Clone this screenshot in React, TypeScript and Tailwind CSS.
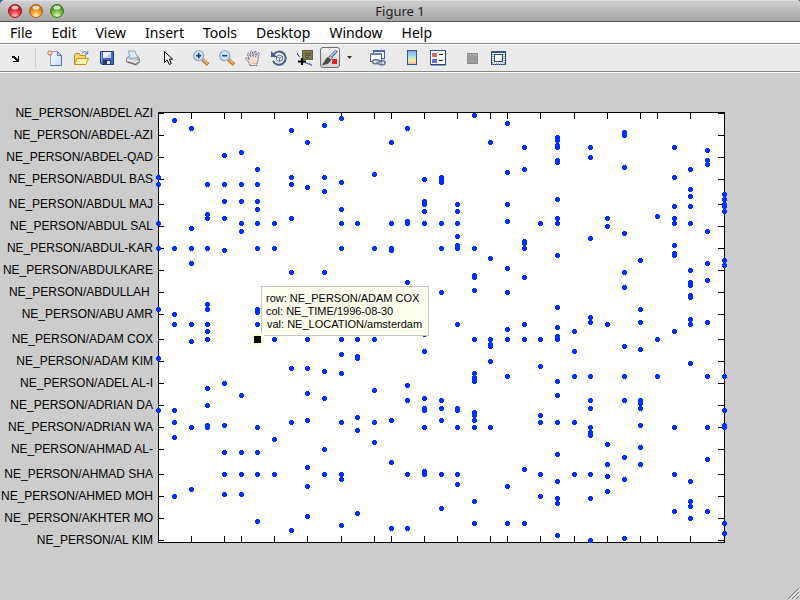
import React from "react";

const MENUS = ["File", "Edit", "View", "Insert", "Tools", "Desktop", "Window", "Help"];

const ROWS: [string, number][] = [
  ["ABDEL AZI", 113],
  ["ABDEL-AZI", 135],
  ["ABDEL-QAD", 157],
  ["ABDUL BAS", 179],
  ["ABDUL MAJ", 204],
  ["ABDUL SAL", 226],
  ["ABDUL-KAR", 248],
  ["ABDULKARE", 270],
  ["ABDULLAH\u00a0", 292],
  ["ABU AMR", 314],
  ["ADAM COX", 339],
  ["ADAM KIM", 361],
  ["ADEL AL-I", 383],
  ["ADRIAN DA", 405],
  ["ADRIAN WA", 427],
  ["AHMAD AL-", 449],
  ["AHMAD SHA", 474],
  ["AHMED MOH", 496],
  ["AKHTER MO", 518],
  ["AL KIM", 540],
];

const COLUMN_TICKS = [191, 224, 241, 274, 307, 341, 374, 391, 424, 457, 490, 507, 540, 574, 607, 640, 657, 690];

const POINTS: [number, number[]][] = [
  [158, [177, 184, 223, 248, 309, 358, 410]],
  [174, [120, 248, 314, 324, 410, 422, 437, 496]],
  [191, [128, 228, 248, 263, 324, 341, 427, 489]],
  [207, [184, 214, 218, 248, 304, 309, 324, 331, 339, 388, 405, 425, 427]],
  [224, [155, 184, 201, 218, 250, 383, 425, 452, 474, 494]],
  [241, [152, 184, 201, 223, 231, 395, 452, 474, 494]],
  [257, [169, 184, 201, 209, 223, 248, 309, 312, 324, 427, 452, 474, 521]],
  [274, [223, 248, 339, 439, 474]],
  [291, [130, 177, 184, 218, 272, 368, 422, 530]],
  [307, [142, 187, 339, 368, 393, 420, 467, 486, 516]],
  [324, [125, 177, 191, 272, 371, 398, 449, 474]],
  [341, [118, 182, 209, 223, 248, 339, 354, 373, 422, 474, 479, 525]],
  [357, [223, 339, 356, 358, 417, 430, 513]],
  [374, [174, 248, 339, 390, 422, 442]],
  [391, [142, 223, 248, 250, 420, 462, 528]],
  [407, [128, 221, 223, 282, 385, 400, 474, 528]],
  [424, [179, 201, 204, 211, 223, 334, 351, 398, 408, 410, 427, 471, 474]],
  [441, [177, 179, 182, 223, 248, 292, 400, 408, 420, 474, 508]],
  [457, [204, 211, 223, 236, 245, 248, 324, 408, 410, 427, 474, 484]],
  [474, [115, 248, 275, 277, 290, 339, 373, 377, 379, 381, 412, 415, 420, 427, 501, 523]],
  [490, [142, 258, 339, 344, 346, 361, 427]],
  [507, [123, 172, 204, 221, 268, 292, 329, 339, 376, 486, 523]],
  [524, [147, 169, 241, 243, 248, 277, 324, 339, 469, 523]],
  [540, [223, 339, 366, 415, 422, 474, 496]],
  [557, [137, 140, 145, 147, 160, 162, 199, 218, 223, 255, 307, 327, 336, 339, 381, 395, 422, 454, 481, 498, 503, 535]],
  [574, [331, 351, 376, 422, 474]],
  [590, [147, 157, 238, 317, 322, 376, 400, 408, 427, 432, 435, 474, 498, 540]],
  [607, [218, 226, 324, 444, 464, 476, 491]],
  [624, [132, 135, 167, 233, 272, 287, 346, 376, 400, 457, 479, 538]],
  [640, [260, 309, 322, 349, 400, 403, 408, 425, 447, 464]],
  [657, [216, 339, 376]],
  [674, [147, 177, 206, 218, 223, 245, 253, 255, 331, 427, 474, 511]],
  [690, [169, 189, 196, 206, 223, 270, 282, 285, 295, 297, 319, 324, 363, 481, 501, 506, 518]],
  [707, [150, 160, 164, 231, 263, 280, 322, 376, 427, 459, 511]],
  [724, [194, 199, 204, 206, 211, 260, 265, 376, 410, 425, 427, 523, 533]],
];

function Light({ label, edge, mid, glow }: { label: string; edge: string; mid: string; glow: string }) {
  const id = "light-" + label;
  return (
    <button type="button" aria-label={label} className="h-[14px] w-[14px]">
      <svg viewBox="0 0 14 14" className="h-[14px] w-[14px]">
        <defs>
          <radialGradient id={id} cx="50%" cy="85%" r="80%">
            <stop offset="0" stopColor={glow} />
            <stop offset="0.5" stopColor={mid} />
            <stop offset="1" stopColor={edge} />
          </radialGradient>
        </defs>
        <circle cx="7" cy="7" r="6.5" fill={`url(#${id})`} stroke={edge} />
        <ellipse cx="7" cy="3.4" rx="3.4" ry="2" fill="#fff" opacity="0.75" />
      </svg>
    </button>
  );
}

function Tool({ label, children }: { label: string; children: React.ReactNode }) {
  return (
    <button type="button" aria-label={label} title={label} className="flex h-[22px] w-[26px] items-center justify-center">
      <svg viewBox="0 0 16 16" className="h-4 w-4" fill="none">
        {children}
      </svg>
    </button>
  );
}

function Magnifier({ plus }: { plus: boolean }) {
  return (
    <>
      <path d="M9.5 9.5L15 14.5" stroke="#a8642a" strokeWidth="3.6" />
      <path d="M9.8 9.3L14.8 13.9" stroke="#f2ae5c" strokeWidth="2" />
      <circle cx="5.7" cy="5.7" r="5" fill="#d3e9f8" stroke="#8ea9cb" strokeWidth="1.3" />
      <path d="M3 5.7h5.4" stroke="#1f3f7c" strokeWidth="1.6" />
      {plus && <path d="M5.7 3v5.4" stroke="#1f3f7c" strokeWidth="1.6" />}
    </>
  );
}

function Toolbar() {
  return (
    <div role="toolbar" className="flex h-[29px] items-center border-y border-[#858a85] bg-[#ebebeb] pl-[3px] shadow-[inset_0_1px_0_#fff]">
      <Tool label="Dock">
        <path d="M4 6h3v1h1v1h1v1h1V6h1v6H5v-1h3v-1H7V9H6V8H4z" fill="#000" shapeRendering="crispEdges" />
      </Tool>
      <div className="mx-[6px] h-5 w-px bg-[#cdcdcd]" />
      <Tool label="New Figure">
        <defs>
          <linearGradient id="page" x1="0" y1="0" x2="1" y2="1">
            <stop offset="0" stopColor="#fff" />
            <stop offset="1" stopColor="#c3dafb" />
          </linearGradient>
        </defs>
        <path d="M3.5 1.5h7l4 4v10h-11z" fill="url(#page)" stroke="#86a0cb" />
        <path d="M14.5 5.5v10h-11" stroke="#5876ad" />
        <path d="M10.5 1.5v4h4z" fill="#a9c4ee" stroke="#6784b8" />
        <path d="M3 0v6M0 3h6M1 1l4 4M5 1L1 5" stroke="#dd7245" />
        <rect x="2" y="2" width="2" height="2" fill="#ffe7b5" />
      </Tool>
      <Tool label="Open File">
        <path d="M9 3.5c1-2.5 4-2.5 5 0M14.7 1v3h-3" stroke="#59739b" />
        <path d="M1.5 14.5v-10l1-1h4l1 2h5v3" fill="#f4d878" stroke="#b98b25" />
        <path d="M1.5 14.5l2.5-6h11.5l-2.5 6z" fill="#fff0a3" stroke="#c1942b" />
        <path d="M4.5 10h9" stroke="#fff9d6" />
      </Tool>
      <Tool label="Save Figure">
        <path d="M1.5 1.5h13v13H3l-1.5-1.5z" fill="#4566cb" stroke="#26377f" />
        <path d="M2.5 2v10" stroke="#91aaf0" />
        <rect x="4" y="2" width="8" height="6" fill="#eef5ff" />
        <path d="M10 4h2v4H5z" fill="#c2d3f3" />
        <rect x="4" y="10" width="8" height="4" fill="#24346d" />
        <rect x="8" y="11" width="3" height="3" fill="#dce6fa" />
      </Tool>
      <Tool label="Print Figure">
        <path d="M1.5 8l3-2h8l2 3v3l-3 3-10-3z" fill="#cfcfcd" stroke="#858585" />
        <path d="M5 8.500L3.500 1h6l3.500 6.500z" fill="#dcecff" stroke="#8fa5c2" />
        <path d="M2 9.500l9 3 3-3" stroke="#f6f6f6" />
        <path d="M3 12l8 2.500M11.500 14l2.500-2.500" stroke="#5c5c5c" />
        <rect x="12" y="9" width="2" height="1" fill="#62a45d" />
      </Tool>
      <div className="w-[9px]" />
      <Tool label="Edit Plot">
        <path d="M4.5 1.5v11l2.7-2.5 2.1 4.5 2-1-2-4.3h3.400z" fill="#fff" stroke="#000" />
      </Tool>
      <div className="w-[7px]" />
      <Tool label="Zoom In">
        <Magnifier plus />
      </Tool>
      <Tool label="Zoom Out">
        <Magnifier plus={false} />
      </Tool>
      <Tool label="Pan">
        <path
          d="M5 15.5L3.500 12 .8 9.200c-.6-1.200.7-1.900 1.600-1.100L4.300 9.600 2.500 4.200c-.2-1.300 1.300-1.600 1.800-.4l1.500 3L5.500 2c0-1.500 1.700-1.500 2 0l.6 4.500L9.300 1.700c.4-1.300 2-.9 1.800.4l-.5 4.700 2-3.600c.7-1.100 2-.4 1.600.8l-1.200 4.500c-.2 1.500.3 2.500-1 4.500v2.500z"
          fill="#fbdcc4"
          stroke="#4a5f94"
          strokeWidth="0.9"
          strokeDasharray="2 0.7"
        />
        <path d="M6 13.5h5" stroke="#edbf9f" />
      </Tool>
      <Tool label="Rotate 3D">
        <path d="M2.600 4.500A6.600 6.600 0 1 1 2 10.800" stroke="#465b85" strokeWidth="2" />
        <path d="M0 1v6h6z" fill="#465b85" />
        <path d="M5.5 6.500L8.500 5l3 1.500v3.500l-3 1.500-3-1.500zM5.500 6.500l3 1.500 3-1.500M8.500 8v3.500" fill="#e7eefa" stroke="#566b95" strokeWidth="0.9" />
      </Tool>
      <Tool label="Data Cursor">
        <path d="M0 3l1 2 1.500 2M8 12.500c2 0 2 1.500 4 1.500h1l2 1.500" stroke="#1c2c90" />
        <rect x="5.500" y="0.500" width="10" height="9" fill="#7c7a4e" stroke="#626039" />
        <path d="M8 3.500h6M8 5.500h6M8 7.500h4" stroke="#55532f" />
        <path d="M5 8v7M1 11.500h8" stroke="#000" strokeWidth="2.200" />
      </Tool>
      <button
        type="button"
        aria-label="Brush"
        aria-pressed="true"
        className="ml-[2px] flex h-[21px] w-5 items-center justify-center rounded-[3px] border border-[#707070] bg-linear-to-b from-[#f4f4f4] to-[#d2d2d2]"
      >
        <svg viewBox="0 0 16 16" className="h-4 w-4 shrink-0" fill="none">
          <path d="M14.800 .5L8 7.500" stroke="#3d568e" strokeWidth="3" />
          <path d="M14.500 .5L8.500 6.500" stroke="#c8daf6" strokeWidth="1.200" />
          <path d="M8.500 5.500l2 2-2 2.500-2.500-2.200z" fill="#bcbcbc" stroke="#666" strokeWidth="0.700" />
          <path d="M6 7.500l2.500 2.500c-1 3-3 4-8 4.500C3 13 3 9 6 7.500z" fill="#4b4d4b" stroke="#2d2d2d" strokeWidth="0.700" />
          <rect x="10" y="9" width="5" height="5" fill="#e3251b" />
        </svg>
      </button>
      <button type="button" aria-label="Brush options" className="flex h-[22px] w-[18px] items-center justify-center">
        <svg viewBox="0 0 5 3" className="h-[3px] w-[5px]">
          <path d="M0 0h5L2.500 3z" fill="#333" />
        </svg>
      </button>
      <div className="w-[7px]" />
      <Tool label="Link Plot">
        <rect x="3.500" y="0.500" width="11" height="8" fill="#eef4fd" stroke="#415d96" />
        <rect x="3" y="0" width="12" height="2" fill="#4b68a3" />
        <rect x="0.500" y="3.500" width="11" height="8" fill="#fff" stroke="#415d96" />
        <rect x="0" y="3" width="12" height="2" fill="#6984b8" />
        <rect x="2.800" y="9.800" width="6.500" height="4" rx="2" fill="#ebebeb" stroke="#667995" strokeWidth="1.500" />
        <rect x="8.800" y="10.800" width="6.200" height="4" rx="2" stroke="#667995" strokeWidth="1.500" />
        <path d="M6 12l6 1" stroke="#8d9eb5" strokeWidth="1.300" />
      </Tool>
      <div className="w-2" />
      <Tool label="Insert Colorbar">
        <defs>
          <linearGradient id="bar" x1="0" y1="0" x2="0" y2="1">
            <stop offset="0" stopColor="#88a9f2" />
            <stop offset="0.400" stopColor="#9be0ea" />
            <stop offset="0.700" stopColor="#f6efa1" />
            <stop offset="1" stopColor="#f4ae92" />
          </linearGradient>
        </defs>
        <rect x="3.500" y="0.500" width="9" height="14" fill="url(#bar)" stroke="#35538e" />
      </Tool>
      <Tool label="Insert Legend">
        <rect x="0.500" y="0.500" width="15" height="14" fill="#fff" stroke="#35538e" />
        <path d="M15.500 1v14H1" stroke="#27427b" />
        <rect x="2" y="3" width="5" height="4" fill="#d86969" />
        <rect x="2" y="9" width="5" height="4" fill="#626cd8" />
        <path d="M9 4.500h4M9 10.500h4" stroke="#222" />
      </Tool>
      <div className="w-[9px]" />
      <Tool label="Hide Plot Tools">
        <rect x="2.500" y="3.500" width="10" height="10" fill="#9c9c9c" stroke="#8a8a8a" />
        <path d="M3 4.500h9" stroke="#b0b0b0" />
      </Tool>
      <Tool label="Show Plot Tools">
        <rect x="0.500" y="1.500" width="14" height="13" fill="#fff" stroke="#27427b" />
        <rect x="0" y="1" width="15" height="2" fill="#35538e" />
        <path d="M2 4v9M13 4v9M1 13.500h13" stroke="#9eaccb" strokeWidth="2" strokeDasharray="1 1" />
        <rect x="3.500" y="4.500" width="8" height="7" fill="#fff" stroke="#27427b" />
      </Tool>
    </div>
  );
}

function Figure() {
  return (
    <svg
      viewBox="0 73 800 527"
      role="img"
      aria-label="Persons by time"
      className="h-auto w-full border-t border-white font-['Liberation_Sans',Arial,sans-serif]"
    >
      <g shapeRendering="crispEdges">
        <rect x="158" y="112" width="567" height="431" fill="#000" />
        <rect x="159" y="113" width="565" height="429" fill="#fff" />
        {ROWS.map(([name, y]) => (
          <path key={name} d={`M159 ${y}h5v1h-5zM718 ${y}h6v1h-6z`} fill="#000" />
        ))}
        {COLUMN_TICKS.map((x) => (
          <path key={x} d={`M${x} 113h1v6h-1zM${x} 536h1v6h-1z`} fill="#000" />
        ))}
        {POINTS.map(([x, ys]) =>
          ys.map((y) => (
            <path key={`${x}-${y}`} d={`M${x - 1} ${y - 2}h3v1h1v3h-1v1h-3v-1h-1v-3h1z`} fill="#0030ff" />
          )),
        )}
      </g>
      <g fontSize="12" textAnchor="end" fill="#000">
        {ROWS.map(([name, y]) => (
          <text key={name} x="153" y={y + 4}>
            {"NE_PERSON/" + name}
          </text>
        ))}
      </g>
      <g shapeRendering="crispEdges">
        <rect x="261" y="286" width="168" height="50" fill="#c8c8c8" />
        <rect x="262" y="287" width="166" height="48" fill="#fffff0" />
        <rect x="251" y="333" width="13" height="13" fill="#ffffe1" />
        <rect x="254" y="336" width="7" height="7" fill="#000" />
      </g>
      <g fontSize="11" fill="#000">
        <text x="266" y="302">row: NE_PERSON/ADAM COX</text>
        <text x="266" y="315">col: NE_TIME/1996-08-30</text>
        <text x="267" y="328">val: NE_LOCATION/amsterdam</text>
      </g>
      <path d="M788 599l11-11M792 599l7-7M796 599l3-3" stroke="#777" />
      <path d="M789 600l11-11M793 600l7-7" stroke="#eee" />
    </svg>
  );
}

export default function App() {
  return (
    <div className="min-h-screen bg-[#cccccc] font-['Noto_Sans','Open_Sans',sans-serif]">
      <div className="bg-[#3c5f9f]">
        <header className="grid h-[22px] grid-cols-[1fr_auto_1fr] items-center rounded-tl-[5px] rounded-tr-[3px] border-t border-b border-t-[#dedede] border-b-[#555] bg-linear-to-b from-[#cfcfcf] to-[#a5a5a5]">
          <div className="flex gap-[7px] pl-2">
            <Light label="close" edge="#a3171c" mid="#e8343a" glow="#ffc0b8" />
            <Light label="minimize" edge="#b26016" mid="#f39a2d" glow="#fff3a0" />
            <Light label="zoom" edge="#3f7a1f" mid="#72b83f" glow="#e2ffae" />
          </div>
          <h1 className="text-[13px] leading-5 text-[#222]">Figure 1</h1>
        </header>
      </div>
      <nav className="flex h-[21px] items-center gap-[19px] bg-white pl-[10px] text-sm leading-5 text-black">
        {MENUS.map((m) => (
          <button key={m} type="button">
            {m}
          </button>
        ))}
      </nav>
      <Toolbar />
      <Figure />
    </div>
  );
}
